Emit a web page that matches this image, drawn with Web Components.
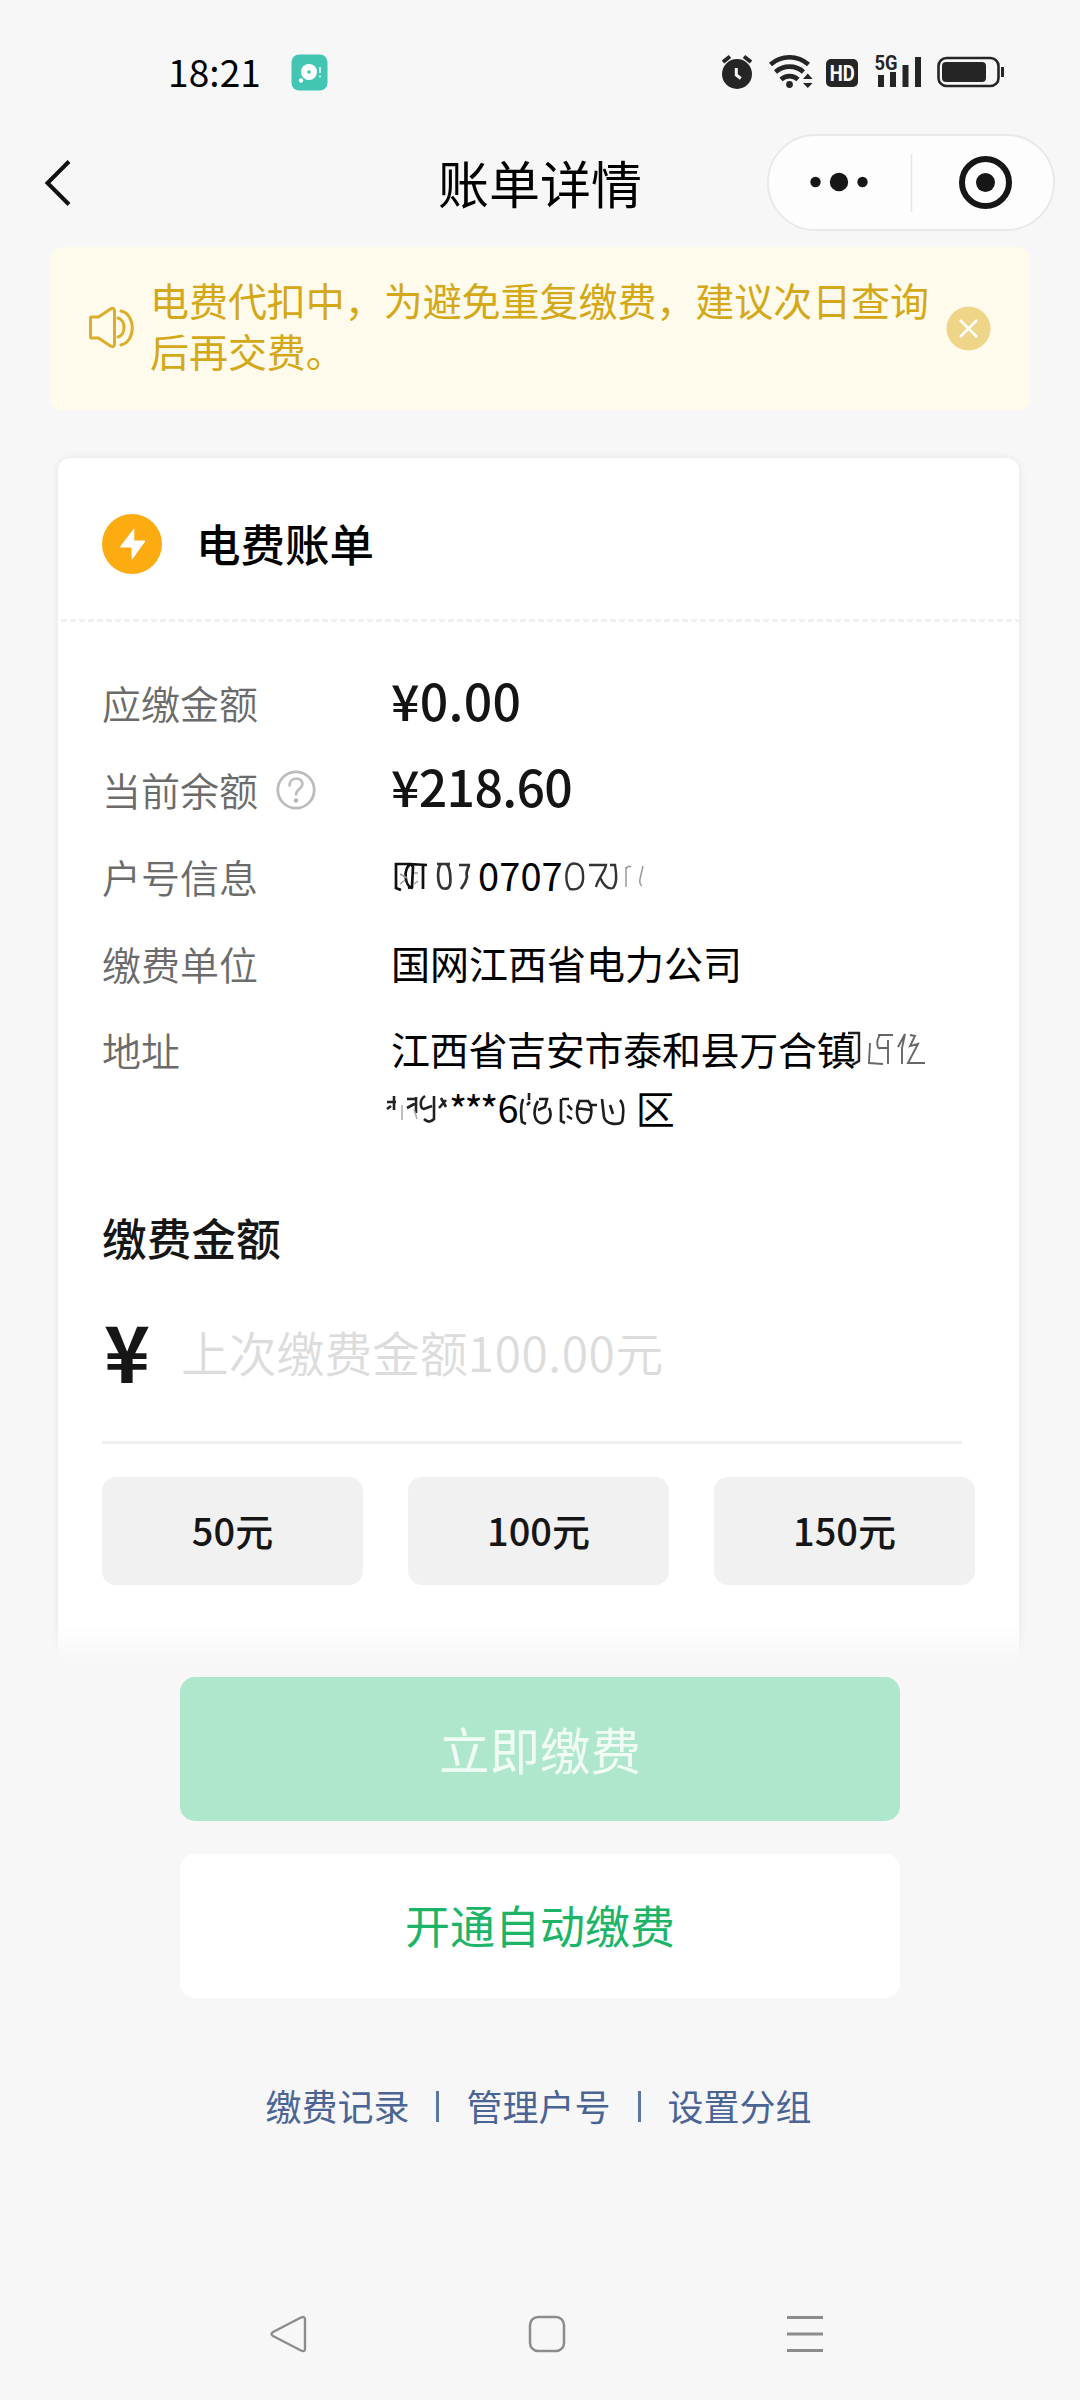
<!DOCTYPE html>
<html lang="zh-CN">
<head>
<meta charset="utf-8">
<title>账单详情</title>
<style>
html,body{margin:0;padding:0;background:#f7f7f7}
body{font-family:"Noto Sans CJK SC",sans-serif;color:#000}
</style>
</head>
<body>
<bill-page></bill-page>
<script>
const define = (name, css, html) => customElements.define(name, class extends HTMLElement {
  constructor() {
    super();
    this.attachShadow({ mode: 'open' }).innerHTML =
      `<style>*{box-sizing:border-box}svg{display:block;flex:none}${css}</style>${html}`;
  }
});

define('status-bar', `
:host{display:flex;height:134px;padding:12px 76px 0 168px;align-items:center;justify-content:space-between}
.l,.r{display:flex;align-items:center}
.time{font-size:37px;line-height:56px;letter-spacing:.1px;margin:-5px 30px 0 0}
.l svg{margin-top:-1px}
`, `
<div class="l"><span class="time">18:21</span>
<svg width="37" height="37" viewBox="0 0 37 37"><rect x=".5" y=".5" width="36" height="36" rx="7.500" fill="#42c6b3"/><circle cx="18" cy="18" r="8" fill="#fff"/><circle cx="18" cy="18" r="1.800" fill="#42c6b3"/><circle cx="10" cy="26.500" r="2.200" fill="#fff"/><path d="M29 13v6M29 21.500v2" stroke="#fff" stroke-width="1.400"/></svg></div>
<svg class="r" width="290" height="44" viewBox="714 51 290 44" fill="none">
<circle cx="737" cy="74" r="15" fill="#252525"/><path d="M723 62l7-5.500M751 62l-7-5.500" stroke="#252525" stroke-width="4"/><path d="M736.300 68v7l4.500 3.500" stroke="#f7f7f7" stroke-width="3"/>
<g stroke="#252525" stroke-width="4.600"><path d="M770.500 64.500a28.500 28.500 0 0 1 38 0"/><path d="M775.500 72a21 21 0 0 1 28 0"/><path d="M781 79.500a12.500 12.500 0 0 1 17 0"/></g><circle cx="789.500" cy="84.500" r="3.400" fill="#252525"/><path d="M803 79l4.800-5.500 4.800 5.500zM803 83h9.600l-4.800 5z" fill="#252525"/>
<rect x="826" y="59" width="32" height="28" rx="5" fill="#252525"/><text x="829.800" y="81" font-family="Roboto,sans-serif" font-weight="700" font-size="22" textLength="25" lengthAdjust="spacingAndGlyphs" fill="#fff">HD</text>
<text x="874.500" y="70" font-family="Roboto,sans-serif" font-weight="700" font-size="21" textLength="23" lengthAdjust="spacingAndGlyphs" fill="#252525">5G</text>
<path d="M878 75h6v12h-6zM890 72h6v15h-6zM902.500 65h6v22h-6zM915 57h6v30h-6z" fill="#252525"/>
<rect x="938.500" y="58" width="60" height="28" rx="8" stroke="#252525" stroke-width="2.600"/><rect x="942" y="62" width="44" height="20" rx="4" fill="#252525"/><path d="M1002.500 67v10" stroke="#252525" stroke-width="3"/>
</svg>`);

define('nav-header', `
:host{display:grid;grid-template-columns:288px 1fr 288px;height:97px;padding:0 25px;align-items:center}
.t{font-size:51px;line-height:60px;text-align:center;margin-top:-2px}
.caps{display:flex;width:288px;height:97px;border:2px solid #e9e9e9;border-radius:49px;background:#fdfdfd}
.back{margin-left:14px}
`, `
<svg class="back" width="36" height="52" viewBox="0 0 36 52" fill="none"><path d="M30 4.500L8.500 26 30 47.500" stroke="#111" stroke-width="4"/></svg>
<div class="t">账单详情</div>
<div class="caps"><svg width="284" height="93" viewBox="769 136 284 93"><circle cx="815.500" cy="182" r="5.200" fill="#161616"/><circle cx="839" cy="182" r="9.200" fill="#161616"/><circle cx="862.500" cy="182" r="5.200" fill="#161616"/><path d="M911.500 154v58" stroke="#e6e6e6" stroke-width="1.500"/><circle cx="985.500" cy="182.500" r="23.500" fill="none" stroke="#161616" stroke-width="6"/><circle cx="985.500" cy="182.500" r="9.500" fill="#161616"/></svg></div>`);

define('notice-bar', `
:host{display:flex;margin:16px 50px 0;height:163px;background:#fefbec;border-radius:12px;padding:0 39px 0 38px;align-items:center}
p{margin:-7px 0 0 14px;font-size:39px;line-height:51px;color:#d4a817;width:795px;letter-spacing:-.05px;white-space:nowrap}
.s{margin-top:-3px}.x{margin-left:4px;margin-top:-1px}
`, `
<svg class="s" width="48" height="48" viewBox="88 303 48 48" fill="none" stroke="#dcae2b" stroke-width="3" stroke-linecap="round" stroke-linejoin="round"><path d="M91.500 317h7l12-8q4-2 4 2v33q0 4-4 2l-12-8h-7q-1 0-1-1v-19q0-1 1-1z"/><path d="M118 318c8 2 8 17 0 19M121 311c15 3 15 31 0 34"/></svg>
<p><slot></slot></p>
<svg class="x" width="45" height="45" viewBox="0 0 45 45"><circle cx="22.500" cy="22.500" r="22" fill="#efd588"/><path d="M14 14l17 17M31 14L14 31" stroke="#fff" stroke-width="2.600"/></svg>`);

define('bill-card', `
:host{display:block;margin:48px 61px 0 58px;height:1205px;background:#fff;border-radius:12px 12px 0 0;box-shadow:0 0 8px rgba(0,0,0,.08)}
header{display:flex;height:161px;padding:11px 44px 0;align-items:center;gap:34px}
.ht{font-size:44.500px;font-weight:500;line-height:60px;margin-top:-2px}
.dash{height:3px;margin-left:3px;background:repeating-linear-gradient(90deg,#f0f0f0 0 6px,transparent 6px 9px)}
.body{padding:0 44px}
`, `
<header><svg width="60" height="60" viewBox="0 0 60 60"><circle cx="30" cy="30" r="30" fill="#fcac11"/><path d="M31.500 15q.8-1 .8 0v11.500h10q1.500 0 .7 1.200L30.500 45q-1 1.200-1-.3V33.500H19q-1.500 0-.6-1.200z" fill="#fff"/></svg><span class="ht">电费账单</span></header>
<div class="dash"></div><div class="body"><slot></slot></div>`);

define('info-row', `
:host{display:flex;height:87px;align-items:center;font-size:39px;line-height:58px}
.k{width:289px;flex:none;color:#6b6b6b;display:flex;align-items:center;gap:18px;margin-top:-4px;font-size:39px;font-weight:350}
.v{display:flex;align-items:center;white-space:nowrap;margin-top:-6px}
:host([amount]) .v{font-size:50px;font-weight:500;color:#141414;letter-spacing:.3px;margin-top:-10px}
:host([amount=tight]) .v{letter-spacing:-.7px;margin-top:-12px}
`, `<span class="k"><slot name="label"></slot><slot name="hint"></slot></span><span class="v"><slot></slot></span>`);

define('help-icon', `:host{display:block;padding-top:2px}`, `
<svg width="40" height="40" viewBox="0 0 40 40" fill="none" stroke="#bcbcbc" stroke-width="2.800"><circle cx="20" cy="20" r="18.200"/><path d="M13.500 15.500c0-9 13-9 13-1.500 0 5-6.500 5-6.500 10.500" stroke-width="2.600" stroke-linecap="round"/><circle cx="20" cy="30.500" r="2.200" fill="#b5b5b5" stroke="none"/></svg>`);

/* Account number with its ends rubbed out */
define('masked-account', `:host{display:flex;align-items:center;padding-top:4px}span{font-size:38px;letter-spacing:.1px;margin-top:-4px}`, `
<svg width="87" height="34" viewBox="391 859 87 34" fill="none" stroke="#111" stroke-width="2">
<path d="M396 862v25l5 2M395 863h16l2 3-1 20-4 1M411 863c-8 3-7 23 2 24M409 863l18 1M423 864v24" stroke-width="2.700"/><path d="M400 873l7 4M400 883l5-4M414 872h4M414 883l4-3" stroke="#999" stroke-width="1.500"/><path d="M437 863h13M441 863c-4 5-4 20 1 24 9 3 9-5 8-15-1-6-2-9-5-9M459 864h11M469 864c-1 5-4 7-2 12-1 6-3 8-6 12" stroke-width="2.700" stroke="#333"/></svg>
<span>0707</span>
<svg width="90" height="34" viewBox="565 859 90 34" fill="none" stroke="#333" stroke-width="1.900"><path d="M573 863c-6 5-6 19-1 25 9 2 14-4 13-14 0-8-4-13-12-11" stroke-width="2.400"/><path d="M591 864h17c-1 7-8 13-10 22M602 876c2 5 6 13 13 11 5-5 3-16 2-23h-5" stroke-width="2.300"/><path d="M628 866v20M628 868q2-4 5-2M645 865l-3 13q-1 5 2 7" stroke="#999" stroke-width="1.500"/></svg>`);

/* Address: two lines, house details rubbed out */
define('masked-address', `:host{display:block;line-height:58px}.a,.b{display:flex;align-items:center;height:58px}.b{margin-top:2px}.a{letter-spacing:-.3px}.a svg{margin:2px 0 0 -10px}.ast{letter-spacing:-2.700px;margin-right:2px}.six{font-size:38px;margin-top:-3px}.q{margin:-3px 0 0 10px}.b svg:first-child{margin-left:-6px}.b svg{margin-top:1px}`, `
<div class="a"><span>江西省吉安市泰和县万合镇</span><svg width="90" height="44" viewBox="847 1030 90 44" fill="none" stroke="#666" stroke-width="1.900"><path d="M850 1036h11v28l-7 4" stroke="#222" stroke-width="2.400"/><path d="M872 1046l-1 20 14 1M880 1038h15M882 1038c-5 7-2 15 0 13h9M890 1043v24M900 1050l7-13-3 14v16M912 1038l5 1-5 10 8-2-10 19h17"/></svg></div>
<div class="b"><svg width="64" height="36" viewBox="385 1092 64 36" fill="none" stroke="#222" stroke-width="2.600"><path d="M387 1103h9M394 1097v14M387 1110l4-3M407 1100h10M416 1098v16M407 1109l9-5M425 1097c-6 4-5 12-1 13l8-3M434 1097v23q-5 5-10 0M441 1099l5 9M446 1101l-7 8"/><path d="M402 1106v15M414 1110l3 10" stroke="#aaa" stroke-width="1.500"/></svg><span class="ast">***</span><span class="six">6</span>
<svg width="107" height="40" viewBox="521 1088 107 40" fill="none" stroke="#1c1c1c" stroke-width="2.600"><path d="M525 1098c-3 8-2 17-1 23l4 2M531 1092v7M529 1104l3-3M541 1098h8l-2 8-7 3M540 1100c-5 8-5 20 3 22 10 1 11-9 8-15M563 1098v22l4 2M564 1098h7M570 1104l4 5M569 1115l5 3M582 1099c-4 7-5 20 3 23 10 0 10-17 5-22h-8M578 1107l14 2M592 1104h7M604 1098l2 18c2 8 14 8 18 5M612 1104l3 9M622 1099c4 4 4 12 2 22"/></svg><span class="q">区</span></div>`);

define('amount-form', `
:host{display:block}
.t{font-size:44.700px;font-weight:500;line-height:60px;color:#161616}
.in{display:flex;height:177px;align-items:center;width:860px;border-bottom:3px solid #f0f0f0}
.y{font-size:78px;font-weight:700;line-height:90px;color:#161616;width:77px;margin-left:2px;flex:none;margin-top:-10px}
.ph{font-size:47.800px;line-height:70px;color:#dcdcdc;font-weight:350;white-space:nowrap;margin-top:-5px}
.ph b{font-weight:350;letter-spacing:.6px}
.q{display:flex;gap:45px;margin-top:33px}
`, `
<div class="t">缴费金额</div>
<div class="in"><span class="y">¥</span><span class="ph">上次缴费金额<b>100.00</b>元</span></div>
<div class="q"><quick-amount>50元</quick-amount><quick-amount>100元</quick-amount><quick-amount>150元</quick-amount></div>`);

define('quick-amount', `:host{display:flex;width:261px;height:108px;background:#f1f1f1;border-radius:14px;align-items:center;justify-content:center;padding-bottom:4px;font-size:38px;font-weight:500;color:#161616;box-sizing:border-box}`, `<slot></slot>`);

define('action-button', `
:host{display:flex;width:720px;height:144px;border-radius:15px;background:#fff;color:#1cb568;font-size:45px;align-items:center;justify-content:center;padding-bottom:4px;box-sizing:border-box}
:host([disabled]){background:#afe7cc;color:#f0fbf5;font-size:50.500px;padding-bottom:3px}
`, `<slot></slot>`);

define('page-footer', `
:host{display:flex;flex-direction:column;align-items:center;position:relative;margin-top:-48px;padding-top:62px;gap:33px;background:linear-gradient(rgba(247,247,247,0) 10px,#f7f7f7 46px)}
.links{display:flex;align-items:center;color:#4a6594;font-size:36px;line-height:50px;margin:49px 3px 0 0;gap:27px}
i{width:3px;height:31px;background:#5b76a5;margin-top:2px}
`, `
<action-button disabled>立即缴费</action-button><action-button>开通自动缴费</action-button>
<div class="links"><span>缴费记录</span><i></i><span>管理户号</span><i></i><span>设置分组</span></div>`);

define('system-nav', `:host{display:flex;padding:0 256px 0 270px;justify-content:space-between;align-items:center;height:40px;margin-top:184px}`, `
<svg width="38" height="38" viewBox="0 0 38 38" fill="none" stroke="#8c8c8c" stroke-width="2.400" stroke-linejoin="round"><path d="M3 17L31 2.500q4-1.500 4 2v29q0 4-4 2L3 21q-3-2 0-4z"/></svg>
<svg width="38" height="38" viewBox="0 0 38 38" fill="none" stroke="#8c8c8c" stroke-width="2.500"><rect x="2" y="2" width="34" height="34" rx="8"/></svg>
<svg width="38" height="38" viewBox="0 0 38 38" stroke="#8c8c8c" stroke-width="3"><path d="M1 2.500h36M1 19h36M1 35.500h36"/></svg>`);

define('bill-page', `
:host{display:flex;flex-direction:column;width:1080px;height:2400px;background:#f7f7f7;overflow:hidden}
.rows{padding-top:38px}
.addr{height:200px;align-items:flex-start}
.addr masked-address{padding-top:17px}
.addr-label{display:block;padding-top:16px}
amount-form{margin-top:-1px}
`, `
<status-bar></status-bar><nav-header></nav-header>
<notice-bar>电费代扣中，为避免重复缴费，建议次日查询<br>后再交费。</notice-bar>
<bill-card>
<div class="rows">
<info-row amount><span slot="label">应缴金额</span>¥0.00</info-row>
<info-row amount="tight"><span slot="label">当前余额</span><help-icon slot="hint"></help-icon>¥218.60</info-row>
<info-row><span slot="label">户号信息</span><masked-account></masked-account></info-row>
<info-row><span slot="label">缴费单位</span>国网江西省电力公司</info-row>
<info-row class="addr"><span slot="label" class="addr-label">地址</span><masked-address></masked-address></info-row>
</div>
<amount-form></amount-form>
</bill-card>
<page-footer></page-footer><system-nav></system-nav>`);
</script>
</body>
</html>
